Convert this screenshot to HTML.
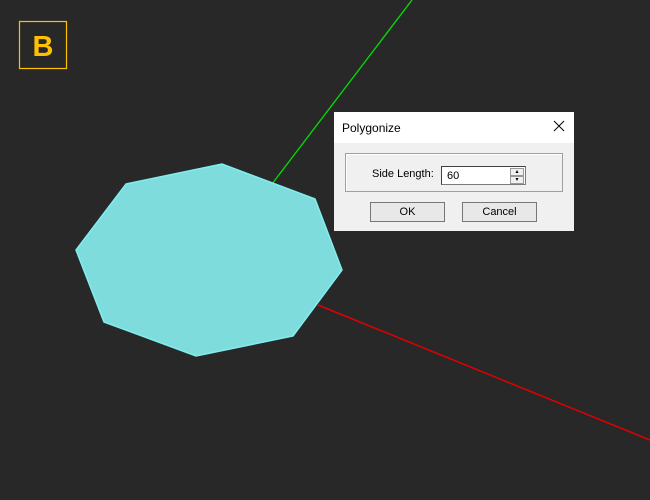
<!DOCTYPE html>
<html><head><style>
body{margin:0;width:650px;height:500px;background:#282828;position:relative;overflow:hidden;font-family:"Liberation Sans",sans-serif}
.dlg{position:absolute;left:334px;top:112px;width:240px;height:119px;background:#f0f0f0}
.tb{position:absolute;left:0;top:0;width:240px;height:31px;background:#fff;font-size:12px;color:#000}
</style></head><body>
<svg width="650" height="500" style="position:absolute;left:0;top:0">
<line x1="412" y1="0" x2="272" y2="184" stroke="#00e000" stroke-width="1.3"/>
<line x1="318" y1="305" x2="650" y2="440" stroke="#e00000" stroke-width="1.5"/>
<polygon points="126,184 222,164 315,199 342,270 293,336 196,356 104,322 76,250" fill="#7fdcdc" stroke="#80eeee" stroke-width="1.5"/>
<rect x="19.5" y="21.5" width="47" height="47" fill="none" stroke="#ffc000" stroke-width="1.2"/>
<text x="43" y="56" text-anchor="middle" font-family="Liberation Sans" font-weight="bold" font-size="29" fill="#ffc000">B</text>
</svg>
<div class="dlg">
<div class="tb"><span style="position:absolute;left:8px;top:9px">Polygonize</span>
<svg style="position:absolute;left:219px;top:8px" width="12" height="12"><path d="M1 1L11 11M11 1L1 11" stroke="#000" stroke-width="1"/></svg></div>
<div style="position:absolute;left:11px;top:41px;width:216px;height:37px;border:1px solid #a0a0a0;box-shadow:inset 1px 1px 0 #fff"></div>
<span style="position:absolute;left:38px;top:56px;font-size:11px">Side Length:</span>
<div style="position:absolute;left:107px;top:54px;width:85px;height:19px;background:#fff;border:1px solid #7a7a7a;border-top-color:#404040;border-left-color:#404040;box-sizing:border-box"><span style="position:absolute;left:5px;top:3px;font-size:11px">60</span>
<div style="position:absolute;right:1px;top:1px;width:14px;height:8px;background:#f0f0f0;border:1px solid #999;box-sizing:border-box;font-size:6px;text-align:center;line-height:6px">▴</div>
<div style="position:absolute;right:1px;top:9px;width:14px;height:8px;background:#f0f0f0;border:1px solid #999;box-sizing:border-box;font-size:6px;text-align:center;line-height:6px">▾</div></div>
<div style="position:absolute;left:36px;top:90px;width:75px;height:20px;border:1px solid #777;box-sizing:border-box;background:#e8e8e8;font-size:11px;text-align:center;line-height:18px">OK</div>
<div style="position:absolute;left:128px;top:90px;width:75px;height:20px;border:1px solid #777;box-sizing:border-box;background:#e8e8e8;font-size:11px;text-align:center;line-height:18px">Cancel</div>
</div>
</body></html>
